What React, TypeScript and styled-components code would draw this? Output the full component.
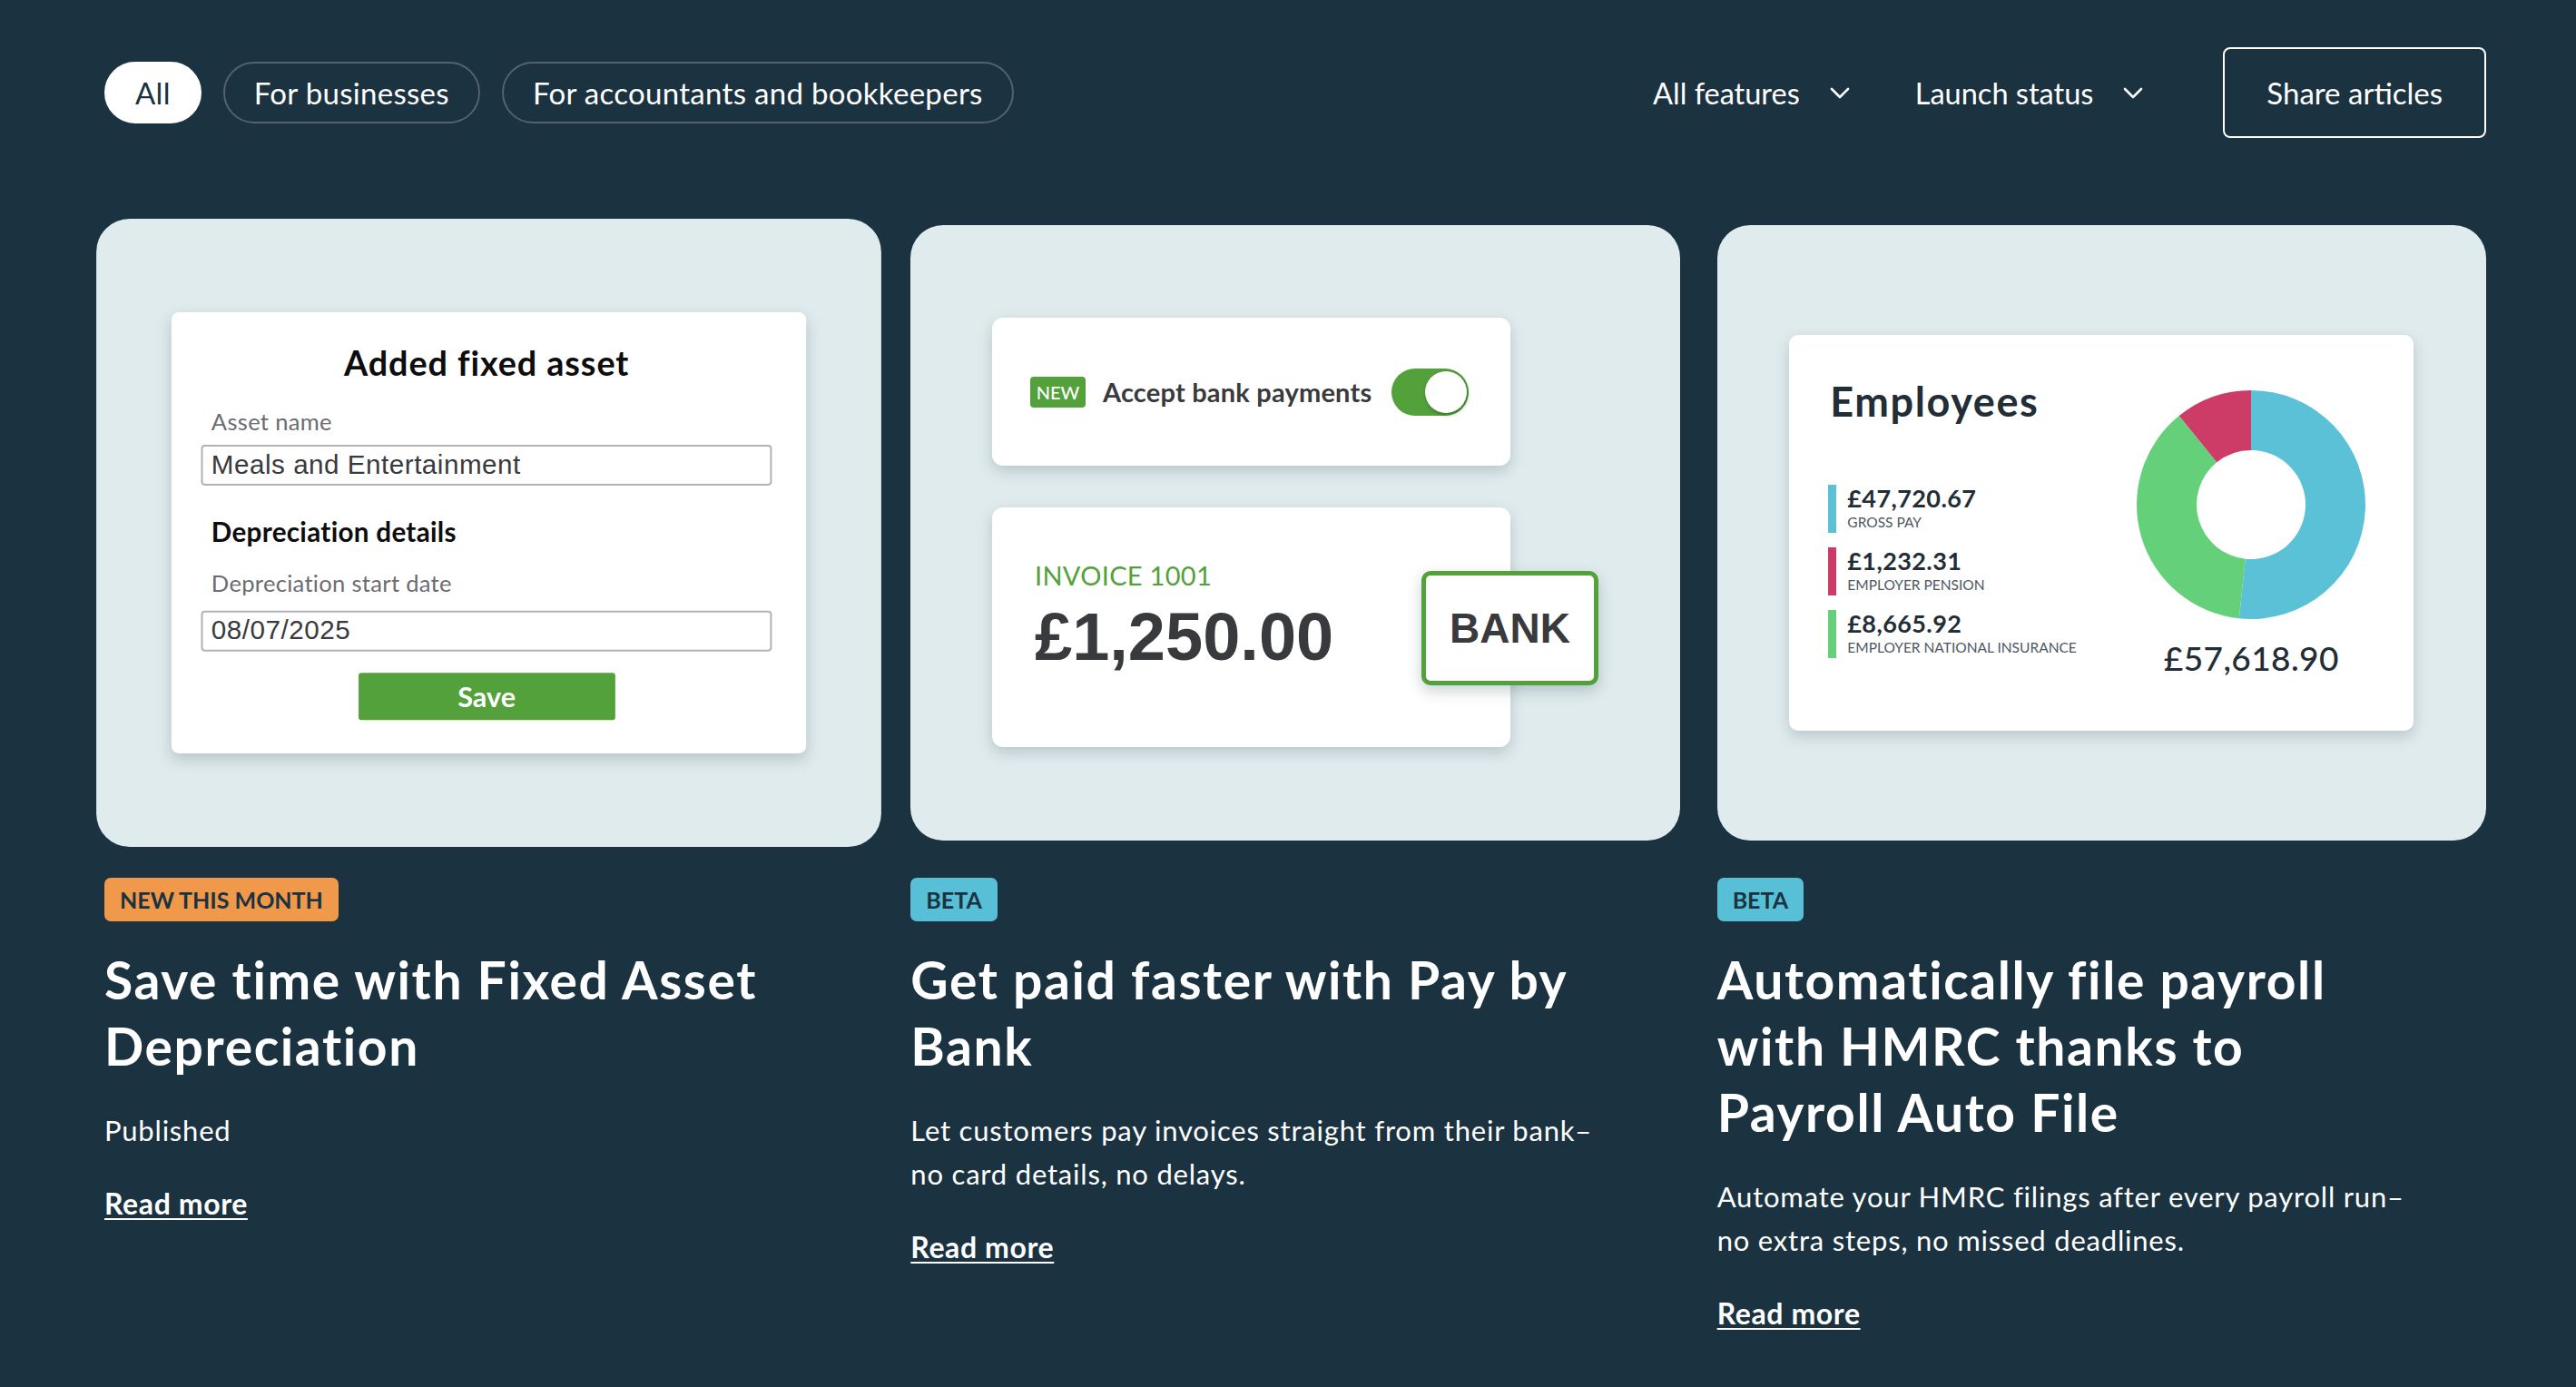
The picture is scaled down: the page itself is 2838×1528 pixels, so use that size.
import React from "react";
import styled, { createGlobalStyle, css } from "styled-components";

const GlobalStyle = createGlobalStyle`
  html, body { margin: 0; padding: 0; background: #1b3240; }
  body {
    font-family: Lato, "Noto Sans", sans-serif;
    color: #ffffff;
    -webkit-font-smoothing: antialiased;
  }
  * { box-sizing: border-box; }
`;

const Page = styled.div`
  min-height: 1528px;
  padding: 52px 99px 80px 115px;
`;

const Header = styled.header`
  display: flex;
  align-items: center;
  justify-content: space-between;
  height: 100px;
`;

const PillGroup = styled.div`
  display: flex;
  gap: 24px;
`;

const Pill = styled.button<{ $active?: boolean }>`
  height: 68px;
  padding: 0 32px;
  border-radius: 34px;
  font-family: Lato, sans-serif;
  font-size: 33px;
  line-height: 1;
  letter-spacing: 0.3px;
  border: 2px solid ${(p) => (p.$active ? "#ffffff" : "#52636e")};
  background: ${(p) => (p.$active ? "#ffffff" : "transparent")};
  color: ${(p) => (p.$active ? "#1b3240" : "#ffffff")};
  cursor: pointer;
`;

const Controls = styled.div`
  display: flex;
  align-items: center;
`;

const Dropdown = styled.button<{ $last?: boolean }>`
  display: flex;
  align-items: center;
  gap: 33px;
  background: none;
  border: none;
  padding: 0;
  margin-right: ${(p) => (p.$last ? 88 : 72)}px;
  color: #ffffff;
  font-family: Lato, sans-serif;
  font-size: 32.5px;
  cursor: pointer;
`;

const ShareButton = styled.button`
  height: 100px;
  padding: 0 46px;
  border: 2px solid #ffffff;
  border-radius: 8px;
  background: transparent;
  color: #ffffff;
  font-family: Lato, sans-serif;
  font-size: 33px;
  cursor: pointer;
`;

const Grid = styled.main`
  display: grid;
  grid-template-columns: repeat(3, 1fr);
  column-gap: 41px;
  margin-top: 96px;
  align-items: start;
`;

const Card = styled.article`
  display: flex;
  flex-direction: column;
  align-items: flex-start;
`;

const Visual = styled.div<{ $hover?: boolean }>`
  position: relative;
  width: 100%;
  aspect-ratio: 5 / 4;
  border-radius: 36px;
  background: #e0ebed;
  display: flex;
  align-items: center;
  justify-content: center;
  overflow: hidden;
  ${(p) =>
    p.$hover &&
    css`
      transform: scale(1.021);
    `}
`;

const Tag = styled.span<{ $color: string }>`
  margin-top: 41px;
  height: 48px;
  padding: 0 17px;
  display: inline-flex;
  align-items: center;
  border-radius: 7px;
  background: ${(p) => p.$color};
  color: #1b3240;
  font-size: 25px;
  font-weight: 700;
  letter-spacing: 0;
`;

const Title = styled.h2`
  margin: 28px 0 0;
  max-width: 770px;
  font-size: 57px;
  line-height: 73px;
  font-weight: 700;
  letter-spacing: 1.6px;
  color: #ffffff;
`;

const Body = styled.p`
  margin: 32px 0 0;
  max-width: 770px;
  font-size: 31px;
  line-height: 48px;
  letter-spacing: 0.8px;
  color: #ffffff;
`;

const ReadMore = styled.a`
  margin-top: 37px;
  font-size: 32px;
  line-height: 40px;
  font-weight: 700;
  letter-spacing: 0.6px;
  color: #ffffff;
  text-decoration: underline;
  text-decoration-thickness: 2px;
  text-underline-offset: 4px;
  cursor: pointer;
`;

/* ---------- Illustration 1 : fixed asset form ---------- */

const MockPanel = styled.div<{ $w: number; $h?: number; $r?: number }>`
  width: ${(p) => p.$w}px;
  ${(p) => (p.$h ? `height: ${p.$h}px;` : "")}
  background: #ffffff;
  border-radius: ${(p) => p.$r ?? 8}px;
  box-shadow: 0 6px 16px rgba(40, 70, 80, 0.22);
`;

const FormPanel = styled(MockPanel)`
  display: flex;
  flex-direction: column;
  padding: 34px 37px 36px 32px;
`;

const FormTitle = styled.div`
  text-align: center;
  font-size: 37px;
  line-height: 42px;
  font-weight: 700;
  letter-spacing: 0.9px;
  color: #0d0d0d;
`;

const FieldLabel = styled.div<{ $top: number }>`
  margin-top: ${(p) => p.$top}px;
  padding-left: 11px;
  font-size: 25px;
  line-height: 28px;
  letter-spacing: 0.3px;
  color: #6b6c72;
`;

const SectionLabel = styled.div`
  margin-top: 34px;
  padding-left: 11px;
  font-size: 29px;
  line-height: 32px;
  font-weight: 700;
  letter-spacing: 0.3px;
  color: #0d0d0d;
`;

const Input = styled.div<{ $top: number }>`
  margin-top: ${(p) => p.$top}px;
  height: 44px;
  border: 2px solid #b1b3b6;
  border-radius: 4px;
  padding-left: 9px;
  display: flex;
  align-items: center;
  font-family: "Liberation Sans", Arial, sans-serif;
  font-size: 29px;
  letter-spacing: 0.5px;
  color: #393a3d;
`;

const SaveButton = styled.div`
  margin: 23px auto 0;
  width: 277px;
  height: 51px;
  border-radius: 3px;
  background: #53a13a;
  color: #ffffff;
  display: flex;
  align-items: center;
  justify-content: center;
  font-size: 30px;
  font-weight: 700;
`;

const FixedAssetArt = () => (
  <FormPanel $w={685} $h={476}>
    <FormTitle>Added fixed asset</FormTitle>
    <FieldLabel $top={27}>Asset name</FieldLabel>
    <Input $top={12}>Meals and Entertainment</Input>
    <SectionLabel>Depreciation details</SectionLabel>
    <FieldLabel $top={25}>Depreciation start date</FieldLabel>
    <Input $top={16}>08/07/2025</Input>
    <SaveButton>Save</SaveButton>
  </FormPanel>
);

/* ---------- Illustration 2 : pay by bank ---------- */

const Composition = styled.div`
  position: relative;
  width: 668px;
  display: flex;
  flex-direction: column;
  gap: 46px;
`;

const ToggleRow = styled(MockPanel)`
  display: flex;
  align-items: center;
  padding-left: 42px;
`;

const NewBadge = styled.span`
  width: 61px;
  height: 34px;
  border-radius: 4px;
  background: #53a13a;
  color: #ffffff;
  display: inline-flex;
  align-items: center;
  justify-content: center;
  font-size: 20px;
  font-weight: 500;
  margin-right: 19px;
`;

const ToggleText = styled.span`
  font-size: 29px;
  font-weight: 700;
  letter-spacing: 0.2px;
  color: #393a3d;
`;

const Switch = styled.span`
  position: relative;
  margin-left: 22px;
  width: 85px;
  height: 52px;
  border-radius: 26px;
  background: #53a13a;
  &::after {
    content: "";
    position: absolute;
    right: 2px;
    top: 3px;
    width: 46px;
    height: 46px;
    border-radius: 50%;
    background: #ffffff;
    box-shadow: 1px 2px 4px rgba(0, 0, 0, 0.3);
  }
`;

const InvoicePanel = styled(MockPanel)`
  padding: 57px 0 0 47px;
`;

const InvoiceLabel = styled.div`
  font-size: 29px;
  line-height: 35px;
  color: #53a13a;
  letter-spacing: 0.3px;
`;

const Amount = styled.div`
  margin-top: 14px;
  font-family: "Liberation Sans", Arial, sans-serif;
  font-size: 74px;
  line-height: 74px;
  font-weight: 700;
  color: #393a3d;
`;

const BankBox = styled.div`
  position: absolute;
  left: 473px;
  top: 279px;
  width: 195px;
  height: 126px;
  border: 5px solid #53a13a;
  border-radius: 10px;
  background: #ffffff;
  box-shadow: 0 6px 16px rgba(40, 70, 80, 0.25);
  display: flex;
  align-items: center;
  justify-content: center;
  font-family: "Liberation Sans", Arial, sans-serif;
  font-size: 46px;
  font-weight: 700;
  color: #393a3d;
`;

const PayByBankArt = () => (
  <Composition>
    <ToggleRow $w={571} $h={163} $r={12}>
      <NewBadge>NEW</NewBadge>
      <ToggleText>Accept bank payments</ToggleText>
      <Switch />
    </ToggleRow>
    <InvoicePanel $w={571} $h={264} $r={12}>
      <InvoiceLabel>INVOICE 1001</InvoiceLabel>
      <Amount>£1,250.00</Amount>
    </InvoicePanel>
    <BankBox>BANK</BankBox>
  </Composition>
);

/* ---------- Illustration 3 : payroll ---------- */

const PayrollPanel = styled(MockPanel)`
  display: flex;
  justify-content: space-between;
  padding: 0 53px 0 43px;
`;

const PayrollLeft = styled.div`
  display: flex;
  flex-direction: column;
`;

const PayrollTitle = styled.div`
  margin-top: 48px;
  padding-left: 2px;
  font-size: 45px;
  line-height: 50px;
  font-weight: 700;
  letter-spacing: 1.6px;
  color: #222d36;
`;

const Legend = styled.div`
  margin-top: 67px;
  display: flex;
  flex-direction: column;
  gap: 16px;
`;

const LegendRow = styled.div<{ $color: string }>`
  display: flex;
  flex-direction: column;
  justify-content: flex-start;
  height: 53px;
  padding-left: 12px;
  border-left: 9px solid ${(p) => p.$color};
`;

const LegendValue = styled.div`
  font-size: 27px;
  line-height: 30px;
  font-weight: 700;
  color: #222d36;
  letter-spacing: 0.4px;
`;

const LegendLabel = styled.div`
  margin-top: 2px;
  font-size: 15.5px;
  line-height: 19px;
  color: #4c5862;
  letter-spacing: 0;
`;

const PayrollRight = styled.div`
  display: flex;
  flex-direction: column;
  align-items: center;
  padding-top: 61px;
`;

const Total = styled.div`
  margin-top: 21px;
  font-size: 37px;
  line-height: 40px;
  font-weight: 500;
  color: #222d36;
  letter-spacing: 0.4px;
`;

const seg = (a0: number, a1: number, ro: number, ri: number, c: number) => {
  const rad = (d: number) => (d * Math.PI) / 180;
  const pt = (r: number, d: number) =>
    `${(c + r * Math.sin(rad(d))).toFixed(2)} ${(c - r * Math.cos(rad(d))).toFixed(2)}`;
  const large = a1 - a0 > 180 ? 1 : 0;
  return `M ${pt(ro, a0)} A ${ro} ${ro} 0 ${large} 1 ${pt(ro, a1)} L ${pt(ri, a1)} A ${ri} ${ri} 0 ${large} 0 ${pt(ri, a0)} Z`;
};

const Donut = () => (
  <svg width="252" height="254" viewBox="0 0 252 254">
    <path d={seg(0, 186, 126, 60, 126)} fill="#5bc1d7" />
    <path d={seg(186, 321, 126, 60, 126)} fill="#64d17a" />
    <path d={seg(321, 360, 126, 60, 126)} fill="#cc3c66" />
  </svg>
);

const legend = [
  { value: "£47,720.67", label: "GROSS PAY", color: "#5bc1d7" },
  { value: "£1,232.31", label: "EMPLOYER PENSION", color: "#cc3c66" },
  { value: "£8,665.92", label: "EMPLOYER NATIONAL INSURANCE", color: "#64d17a" },
];

const PayrollArt = () => (
  <PayrollPanel $w={688} $h={436} $r={10}>
    <PayrollLeft>
      <PayrollTitle>Employees</PayrollTitle>
      <Legend>
        {legend.map((l) => (
          <LegendRow key={l.label} $color={l.color}>
            <LegendValue>{l.value}</LegendValue>
            <LegendLabel>{l.label}</LegendLabel>
          </LegendRow>
        ))}
      </Legend>
    </PayrollLeft>
    <PayrollRight>
      <Donut />
      <Total>£57,618.90</Total>
    </PayrollRight>
  </PayrollPanel>
);

/* ---------- Page ---------- */

const Chevron = () => (
  <svg width="22" height="13" viewBox="0 0 22 13" fill="none">
    <polyline points="2,2 11,11 20,2" stroke="#ffffff" strokeWidth="2.6" strokeLinecap="round" strokeLinejoin="round" />
  </svg>
);

const articles = [
  {
    tag: "NEW THIS MONTH",
    tagColor: "#f0994a",
    title: "Save time with Fixed Asset Depreciation",
    body: <>Published</>,
    art: <FixedAssetArt />,
    hover: true,
  },
  {
    tag: "BETA",
    tagColor: "#57c0d6",
    title: "Get paid faster with Pay by Bank",
    body: (
      <>
        Let customers pay invoices straight from their bank–<wbr />no card details, no delays.
      </>
    ),
    art: <PayByBankArt />,
  },
  {
    tag: "BETA",
    tagColor: "#57c0d6",
    title: "Automatically file payroll with HMRC thanks to Payroll Auto File",
    body: (
      <>
        Automate your HMRC filings after every payroll run–<wbr />no extra steps, no missed deadlines.
      </>
    ),
    art: <PayrollArt />,
  },
];

export default function App() {
  return (
    <>
      <GlobalStyle />
      <Page>
        <Header>
          <PillGroup>
            <Pill $active>All</Pill>
            <Pill>For businesses</Pill>
            <Pill>For accountants and bookkeepers</Pill>
          </PillGroup>
          <Controls>
            <Dropdown>
              All features <Chevron />
            </Dropdown>
            <Dropdown $last>
              Launch status <Chevron />
            </Dropdown>
            <ShareButton>Share articles</ShareButton>
          </Controls>
        </Header>
        <Grid>
          {articles.map((a) => (
            <Card key={a.title}>
              <Visual $hover={a.hover}>{a.art}</Visual>
              <Tag $color={a.tagColor}>{a.tag}</Tag>
              <Title>{a.title}</Title>
              <Body>{a.body}</Body>
              <ReadMore>Read more</ReadMore>
            </Card>
          ))}
        </Grid>
      </Page>
    </>
  );
}
